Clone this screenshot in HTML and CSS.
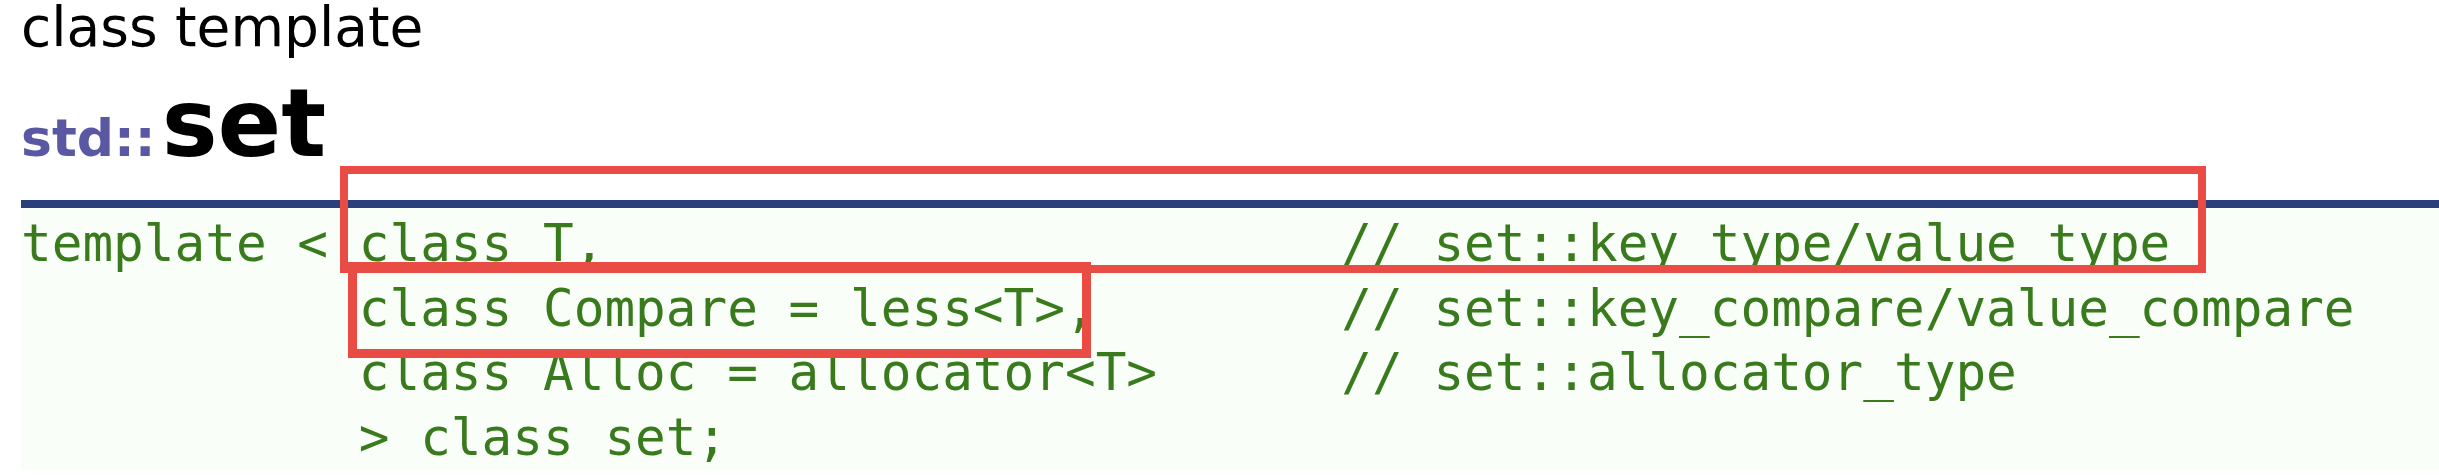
FILE: index.html
```html
<!DOCTYPE html>
<html lang="en">
<head>
<meta charset="utf-8">
<title>std::set</title>
<link rel="stylesheet" href="styles.css">
</head>
<body>
<div class="page">
  <div class="kind">class template</div>
  <h1 class="title"><span class="ns">std::</span><span class="name">set</span></h1>
  <div class="proto">
<pre class="code">template &lt; class T,                        // set::key_type/value_type
           class Compare = less&lt;T&gt;,        // set::key_compare/value_compare
           class Alloc = allocator&lt;T&gt;      // set::allocator_type
           &gt; class set;</pre>
  </div>
  <div class="mark mark-a"></div>
  <div class="mark mark-b"></div>
</div>
</body>
</html>
```

FILE: styles.css
```css
html, body {
  margin: 0;
  padding: 0;
  background: #ffffff;
}

.page {
  position: relative;
  padding-left: 21px;
  height: 475px;
  box-sizing: border-box;
  overflow: hidden;
}

.kind {
  font-family: "DejaVu Sans", Verdana, sans-serif;
  font-size: 55px;
  line-height: 55px;
  color: #000000;
}

.title {
  margin: 19px 0 26px;
  font-family: "DejaVu Sans", Verdana, sans-serif;
  font-weight: bold;
  font-size: 94px;
  line-height: 100px;
  color: #000000;
}

.ns {
  font-size: 52px;
  line-height: 1;
  color: #5b58a3;
}

.name {
  margin-left: 6px;
}

.proto {
  border-top: 8px solid #2b3f7b;
  background: #f9fff8;
}

.code {
  margin: 0;
  padding: 4px 0 0;
  font-family: "DejaVu Sans Mono", monospace;
  font-size: 51px;
  line-height: 64.5px;
  color: #387a1c;
  white-space: pre;
}

.mark {
  position: absolute;
  box-sizing: border-box;
  border: 8px solid #e84c45;
}

.mark-a {
  left: 340px;
  top: 166px;
  width: 1866px;
  height: 107px;
}

.mark-b {
  left: 348px;
  top: 262px;
  width: 743px;
  height: 96px;
  border-width: 9px;
}
```
